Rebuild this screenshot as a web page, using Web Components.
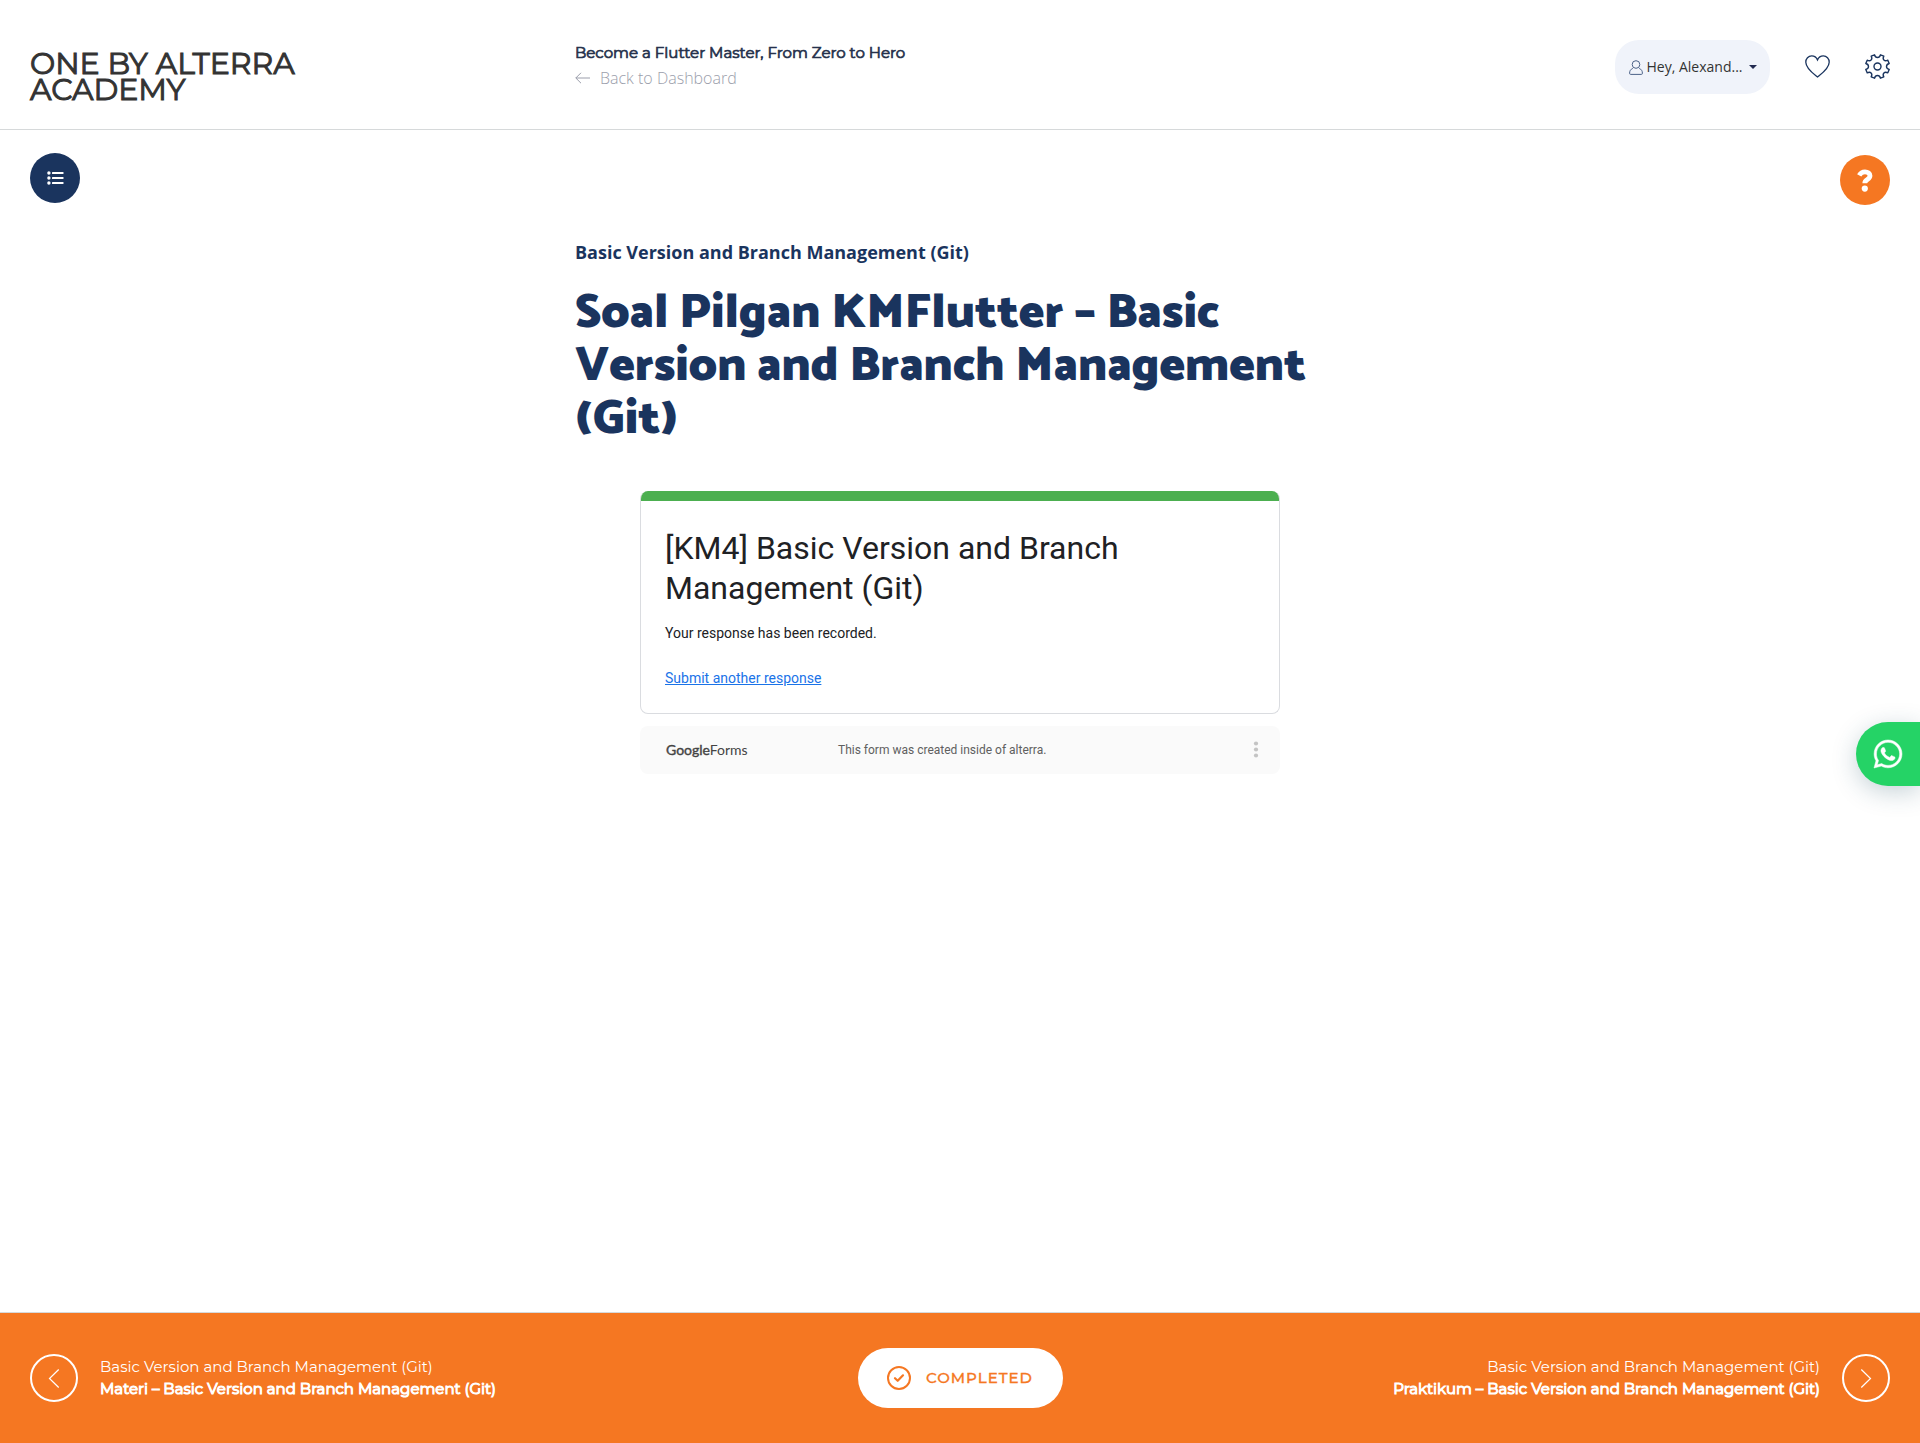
<!DOCTYPE html>
<html lang="en">
<head>
<meta charset="utf-8">
<meta name="viewport" content="width=device-width, initial-scale=1">
<title>Soal Pilgan KMFlutter – Basic Version and Branch Management (Git)</title>
<style>
  :root {
    --navy: #1a345e;
    --orange: #f57722;
    --display: Montserrat, Inter, "Open Sans", sans-serif;
    --heading: Catamaran, "Open Sans", sans-serif;
    --text: "Open Sans", sans-serif;
    --column: 770px;
    --gutter: 30px;
  }
  body { margin: 0; background: #fff; color: var(--navy); font: 16px/24px var(--text); }
</style>
</head>
<body>
<course-page></course-page>
<script>
const define = (name, html) => {
  const template = document.createElement('template');
  template.innerHTML = '<style>*{box-sizing:border-box}a{color:inherit;text-decoration:none}svg{display:block;flex:none;overflow:visible}button{font:inherit;color:inherit;border:0;padding:0;background:none;cursor:pointer}</style>' + html;
  customElements.define(name, class extends HTMLElement {
    constructor() {
      super();
      this.attachShadow({ mode: 'open' }).append(template.content.cloneNode(true));
    }
  });
};

define('site-logo', `
<style>
  :host { display: block; }
  a { display: block; max-width: 300px; color: #333; font: 400 30px/26px var(--display); -webkit-text-stroke: 1px #333; text-transform: uppercase; }
</style>
<a href="#"><slot></slot></a>`);

define('course-crumb', `
<style>
  :host { display: block; }
  .title { font: 400 15px/24px var(--display); -webkit-text-stroke: .7px #26324c; color: #26324c; }
  a { display: flex; align-items: center; gap: 10px; font-weight: 300; line-height: 26px; color: #9b9eab; }
</style>
<div class="title"><slot></slot></div>
<a href="#"><svg width="15" height="12" viewBox="0 0 15 12" fill="none" stroke="currentColor"><path d="M15 6H.8M6 .8.8 6 6 11.200"/></svg><span>Back to Dashboard</span></a>`);

define('user-menu', `
<style>
  :host { display: block; }
  button { display: flex; align-items: center; justify-content: center; gap: 4px; width: 155px; height: 54px; border-radius: 24px; background: #f0f3fa; color: #333; font-size: 14px; }
  .caret { border: 4px solid transparent; border-top-color: #222b50; border-bottom: 0; margin-left: 2px; }
</style>
<button type="button" aria-haspopup="menu">
  <svg width="14" height="15" viewBox="0 0 14 15" fill="none" stroke="#4c6288"><circle cx="7" cy="4.500" r="3.800"/><path d="M3.800 8.400C1.500 9.300.6 11 .6 13.200c0 .8.300 1.200 1 1.200h10.800c.7 0 1-.4 1-1.200 0-2.200-.9-3.900-3.200-4.800"/></svg>
  <slot></slot><span class="caret"></span>
</button>`);

define('site-header', `
<style>
  :host { display: grid; grid-template-columns: 1fr minmax(0, var(--column)) 1fr; height: 130px; padding: 0 var(--gutter); border-bottom: 1px solid #d6d9da; }
  ::slotted(site-logo) { padding-top: 51px; }
  ::slotted(course-crumb) { padding-top: 41px; }
  nav { display: flex; justify-content: flex-end; align-items: center; height: 54px; margin-top: 40px; gap: 35px; }
</style>
<slot name="logo"></slot>
<slot name="crumb"></slot>
<nav>
  <slot name="user"></slot>
  <a href="#" aria-label="Wishlist"><svg width="25" height="23" viewBox="0 1 25 23" fill="none" stroke="#1a345e" stroke-width="1.300"><path d="M12.500 22C9.500 19.500 1 14 .8 7.300.7 3.600 3.400.9 6.700.9c2.600 0 4.700 1.400 5.800 4 1.100-2.600 3.200-4 5.800-4 3.300 0 6 2.700 5.900 6.400C24 14 15.500 19.500 12.500 22Z"/></svg></a>
  <a href="#" aria-label="Settings"><svg width="25" height="25" viewBox="0 1 25 25" fill="none" stroke="#1a345e" stroke-width="1.400"><circle cx="12.500" cy="12.500" r="3.500"/><path stroke-linejoin="round" d="M9.500.8C10 2.600 11 3.500 12.500 3.500S15 2.600 15.500.8L18.800 2.200C17.900 3.900 18 5.200 18.900 6.100S21.100 7.100 22.800 6.200L24.200 9.500C22.400 10 21.500 11 21.500 12.500S22.400 15 24.200 15.500L22.800 18.800C21.100 17.900 19.800 18 18.900 18.900S17.900 21.100 18.800 22.800L15.500 24.200C15 22.400 14 21.500 12.500 21.500S10 22.400 9.500 24.200L6.200 22.800C7.100 21.100 7 19.800 6.100 18.900S3.900 17.900 2.200 18.800L.8 15.500C2.600 15 3.500 14 3.500 12.500S2.600 10 .8 9.500L2.200 6.200C3.900 7.100 5.200 7 6.100 6.100S7.100 3.900 6.200 2.200Z"/></svg></a>
</nav>`);

define('tool-row', `
<style>
  :host { display: flex; justify-content: space-between; padding: 23px var(--gutter) 0; height: 76px; }
  button { display: flex; align-items: center; justify-content: center; width: 50px; height: 50px; border-radius: 50%; color: #fff; }
  .list { background: var(--navy); }
  .help { background: var(--orange); margin-top: 2px; }
</style>
<button class="list" type="button" aria-label="Curriculum"><svg width="17" height="14" viewBox="0 0 17 14" fill="#fff"><circle cx="1.900" cy="2" r="1.700"/><circle cx="1.900" cy="7" r="1.700"/><circle cx="1.900" cy="12" r="1.700"/><rect x="5" y="1" width="11.500" height="2" rx=".5"/><rect x="5" y="6" width="11.500" height="2" rx=".5"/><rect x="5" y="11" width="11.500" height="2" rx=".5"/></svg></button>
<button class="help" type="button" aria-label="Help"><svg width="16" height="23" viewBox="0 0 16 23"><path d="M2.200 6.400C3.600 3.900 5.400 2.900 8 2.900c2.900 0 5 1.500 5 3.900 0 4-5.200 3.500-5.200 7.400" fill="none" stroke="#fff" stroke-width="4.800"/><circle cx="7.800" cy="19.600" r="3.100" fill="#fff"/></svg></button>`);

define('lesson-heading', `
<style>
  :host { display: block; }
  .section { font-size: 18px; font-weight: 700; line-height: 24px; }
  h1 { margin: 23px 0 0; font: 900 48px/53px var(--heading); color: var(--navy); }
</style>
<div class="section"><slot name="section"></slot></div>
<h1><slot></slot></h1>`);

define('form-receipt', `
<style>
  :host { display: block; font-family: Roboto, sans-serif; color: #202124; }
  .card { border: 1px solid #dadce0; border-top: 0; border-radius: 8px; overflow: hidden; }
  .bar { height: 10px; background: #4caf50; margin: 0 -1px; }
  .body { padding: 27px 24px 25px; }
  h2 { margin: 0; font-size: 32px; line-height: 40px; font-weight: 400; max-width: 560px; }
  p { margin: 15px 0 25px; font-size: 14px; line-height: 20px; }
  .again { display: block; font-size: 14px; line-height: 20px; color: #1a73e8; text-decoration: underline; }
  footer { display: grid; grid-template-columns: 172px 1fr auto; align-items: center; height: 48px; margin-top: 12px; padding: 0 20px 0 26px; border-radius: 8px; background: #fafafa; font-size: 12px; line-height: 16px; color: #5f5f5f; }
  .brand { font: 400 14px/20px Lato, sans-serif; color: #444; }
  .brand b { font-weight: 400; -webkit-text-stroke: .4px #444; }
</style>
<div class="card">
  <div class="bar"></div>
  <div class="body">
    <h2><slot></slot></h2>
    <p>Your response has been recorded.</p>
    <a class="again" href="#">Submit another response</a>
  </div>
</div>
<footer>
  <a class="brand" href="#"><b>Google</b>Forms</a>
  <span>This form was created inside of alterra.</span>
  <button type="button" aria-label="More options"><svg width="8" height="18" viewBox="0 0 8 18" fill="#c4c4c4"><circle cx="4" cy="2.500" r="2.100"/><circle cx="4" cy="8.500" r="2.100"/><circle cx="4" cy="14.500" r="2.100"/></svg></button>
</footer>`);

define('chat-tab', `
<style>
  :host { position: fixed; right: 0; top: 50%; z-index: 2; }
  a { display: flex; align-items: center; padding-left: 18px; width: 64px; height: 64px; border-radius: 32px 0 0 32px; background: #25d366; box-shadow: 0 6px 24px rgba(30, 80, 100, .25); }
</style>
<a href="#" aria-label="WhatsApp"><svg width="28" height="28" viewBox="0 0 448 448" fill="#fff" stroke="#fff" stroke-width="8"><path d="M380.900 65.100C339 23.100 283.200 0 223.900 0 101.500 0 1.900 99.600 1.900 222c0 39.100 10.200 77.300 29.600 111L0 448l117.700-30.900c32.400 17.700 68.900 27 106.100 27h.1c122.300 0 224.100-99.600 224.100-222 0-59.300-25.200-115-67.100-157zm-157 341.600c-33.200 0-65.700-8.900-94-25.700l-6.700-4-69.800 18.300L72 327.200l-4.400-7c-18.500-29.400-28.200-63.300-28.200-98.200 0-101.700 82.800-184.500 184.600-184.500 49.300 0 95.600 19.200 130.400 54.100 34.800 34.900 56.200 81.200 56.100 130.500 0 101.800-84.900 184.600-186.600 184.600zm101.200-138.200c-5.500-2.800-32.800-16.200-37.900-18-5.100-1.900-8.800-2.800-12.500 2.800-3.700 5.600-14.300 18-17.600 21.800-3.200 3.700-6.500 4.200-12 1.400-32.600-16.300-54-29.100-75.500-66-5.700-9.800 5.700-9.100 16.300-30.300 1.800-3.700.9-6.900-.5-9.700-1.400-2.800-12.500-30.100-17.100-41.200-4.500-10.800-9.100-9.300-12.500-9.500-3.200-.2-6.900-.2-10.600-.2-3.700 0-9.700 1.400-14.800 6.900-5.100 5.600-19.400 19-19.400 46.300 0 27.300 19.900 53.700 22.600 57.400 2.800 3.700 39.100 59.700 94.800 83.800 35.200 15.200 49 16.500 66.600 13.900 10.700-1.600 32.800-13.400 37.400-26.400 4.600-13 4.600-24.100 3.200-26.400-1.300-2.500-5-3.900-10.500-6.600z"/></svg></a>`);

define('lesson-link', `
<style>
  :host { display: block; }
  a { display: flex; align-items: center; gap: 22px; font: 400 15px/22px var(--display); }
  strong { display: block; font-weight: 400; -webkit-text-stroke: 1px #fff; }
  .ring { display: flex; align-items: center; justify-content: center; flex: none; width: 48px; height: 48px; border: 2px solid #fff; border-radius: 50%; }
  :host([direction="next"]) a { flex-direction: row-reverse; text-align: right; }
  :host([direction="next"]) svg { transform: scaleX(-1); }
</style>
<a href="#">
  <span class="ring"><svg width="12" height="20" viewBox="0 0 12 20" fill="none" stroke="#fff" stroke-width="1.200"><path d="M10.700 1.500 1.500 10.500l9.200 9"/></svg></span>
  <span><slot name="section"></slot><strong><slot></slot></strong></span>
</a>`);

define('complete-button', `
<style>
  :host { display: block; }
  button { display: flex; align-items: center; justify-content: center; gap: 15px; width: 205px; height: 60px; border-radius: 30px; background: #fff; color: var(--orange); font: 500 15px/24px var(--display); letter-spacing: 1px; -webkit-text-stroke: .3px var(--orange); }
</style>
<button type="button"><svg width="24" height="24" viewBox="0 0 24 24" fill="none" stroke="currentColor" stroke-width="2"><circle cx="12" cy="12" r="11"/><path stroke-width="2.200" stroke-linecap="round" stroke-linejoin="round" d="m8 12.200 2.700 2.600L16 9.300"/></svg><slot></slot></button>`);

define('lesson-nav', `
<style>
  :host { display: grid; grid-template-columns: 1fr auto 1fr; align-items: center; height: 131px; padding: 0 var(--gutter) 1px; border-top: 1px solid #d6d9da; background: var(--orange); color: #fff; }
  ::slotted([direction="next"]) { justify-self: end; }
</style>
<slot></slot>`);

define('course-page', `
<style>
  :host { display: flex; flex-direction: column; min-height: 100vh; }
  main { flex: 1; width: 100%; max-width: var(--column); margin: 0 auto; padding-top: 34px; }
  form-receipt { max-width: 640px; margin: 45px auto 0; }
</style>
<site-header>
  <site-logo slot="logo">One by Alterra Academy</site-logo>
  <course-crumb slot="crumb">Become a Flutter Master, From Zero to Hero</course-crumb>
  <user-menu slot="user">Hey, Alexand...</user-menu>
</site-header>
<tool-row></tool-row>
<main>
  <lesson-heading><span slot="section">Basic Version and Branch Management (Git)</span>Soal Pilgan KMFlutter – Basic Version and Branch Management (Git)</lesson-heading>
  <form-receipt>[KM4] Basic Version and Branch Management (Git)</form-receipt>
</main>
<lesson-nav>
  <lesson-link direction="previous"><span slot="section">Basic Version and Branch Management (Git)</span>Materi – Basic Version and Branch Management (Git)</lesson-link>
  <complete-button>COMPLETED</complete-button>
  <lesson-link direction="next"><span slot="section">Basic Version and Branch Management (Git)</span>Praktikum – Basic Version and Branch Management (Git)</lesson-link>
</lesson-nav>
<chat-tab></chat-tab>`);
</script>
</body>
</html>
